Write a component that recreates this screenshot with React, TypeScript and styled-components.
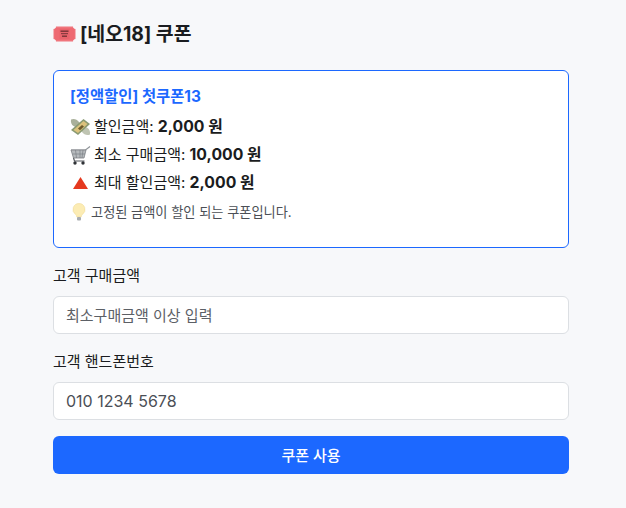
import React from 'react';
import styled, { createGlobalStyle } from 'styled-components';

const GlobalStyle = createGlobalStyle`
    html, body {
        margin: 0;
        padding: 0;
        background: #f7f8fa;
    }
    body {
        font-family: Inter, "Noto Sans CJK KR", sans-serif;
        color: #1a1c20;
    }
`;

const Root = styled.div`
    width: 516px;
    margin-left: 53px;
    padding: 21px 0 34px;
`;

const Title = styled.h1`
    display: flex;
    align-items: center;
    gap: 4px;
    height: 26px;
    margin: 0 0 23px;
    font-size: 19.4px;
    line-height: 26px;
    font-weight: 700;
`;

const Card = styled.div`
    box-sizing: border-box;
    height: 178px;
    padding: 15px 16px;
    background: #ffffff;
    border: 1px solid #1c68ff;
    border-radius: 6px;
`;

const CouponName = styled.div`
    height: 22px;
    margin-bottom: 5px;
    font-size: 15.4px;
    line-height: 22px;
    font-weight: 700;
    color: #1c68ff;
`;

const InfoRow = styled.div`
    display: flex;
    align-items: center;
    gap: 3px;
    height: 28px;
    font-size: 15px;
    line-height: 28px;
`;

const Amount = styled.strong`
    font-size: 15.8px;
    font-weight: 700;
`;

const Note = styled.div`
    display: flex;
    align-items: center;
    gap: 3px;
    height: 20px;
    margin-top: 5px;
    font-size: 13.2px;
    line-height: 20px;
    color: #4b4f56;
`;

const Field = styled.label`
    display: block;
    margin-top: 18px;
`;

const FieldLabel = styled.div`
    height: 20px;
    margin-bottom: 10px;
    font-size: 15px;
    line-height: 20px;
    color: #1a1c20;
`;

const TextInput = styled.input`
    display: block;
    box-sizing: border-box;
    width: 100%;
    height: 38px;
    padding: 0 12px;
    background: #ffffff;
    border: 1px solid #dcdfe3;
    border-radius: 6px;
    outline: none;
    font-family: inherit;
    font-size: 16px;
    color: #4b4f56;
    &::placeholder {
        color: #5c6066;
        opacity: 1;
        font-size: 15px;
    }
`;

const SubmitButton = styled.button`
    display: block;
    width: 100%;
    height: 38px;
    margin-top: 16px;
    padding-bottom: 2px;
    background: #1c68ff;
    border: none;
    border-radius: 6px;
    font-family: inherit;
    font-size: 15px;
    font-weight: 500;
    color: #ffffff;
    cursor: pointer;
`;

const Icon = styled.svg`
    flex: none;
    display: block;
`;

const TicketIcon = () => (
    <Icon width="23" height="16" viewBox="0 0 23 16">
        <path d="M3 .5h17A2.500 2.500 0 0 0 22.500 3v10a2.500 2.500 0 0 0-2.500 2.500H3A2.500 2.500 0 0 0 .5 13V3A2.500 2.500 0 0 0 3 .5z" fill="#f0757c" />
        <rect x="1.500" y="2" width="20" height="12" rx="2" fill="#ee6a72" />
        <rect x="6.500" y="3" width="10" height="10" fill="#e9636b" />
        <rect x="7.500" y="4.500" width="8" height="1.400" fill="#7a3236" />
        <rect x="8" y="7" width="7" height="1.200" fill="#8c3c41" />
        <rect x="9" y="9.500" width="5" height="1.400" fill="#7a3236" />
    </Icon>
);

const MoneyIcon = () => (
    <Icon width="21" height="18" viewBox="0 0 21 18">
        <path d="M1 1.500c3-1.500 6 0 8 2.500l2 2-4 4-3.500-2C1.500 7 .5 4 1 1.500z" fill="#a9b09a" />
        <path d="M20 16.500c-3 1.500-6 0-8-2.500l-2-2 4-4 3.500 2c2 1 3 4 2.500 6.500z" fill="#bfc4b2" />
        <path d="M1 12l12.500-11 6.500 5L8 17z" fill="#8a9a72" />
        <path d="M3.500 12L13.500 3l4 3L8 15z" fill="#dcc27c" />
        <path d="M8 10.500l4-3.500 2 1.500-4 3.700z" fill="#6e5a2c" />
    </Icon>
);

const CartIcon = () => (
    <Icon width="21" height="19" viewBox="0 0 21 19">
        <path d="M1 4h14.500L20 0.500" fill="none" stroke="#8f9499" strokeWidth="1.200" />
        <path d="M1 4l2.500 8h10.500L16 4z" fill="#b6babd" stroke="#7d8186" strokeWidth="0.800" />
        <path d="M2.500 8h12.500M5.500 4l1 8M10 4v8M13 4l-1 8" stroke="#7d8186" strokeWidth="0.700" />
        <path d="M3.500 12l1 3h10" fill="none" stroke="#55595e" strokeWidth="1.200" />
        <circle cx="5" cy="17" r="1.700" fill="#2f3236" />
        <circle cx="13" cy="17" r="1.700" fill="#2f3236" />
    </Icon>
);

const TriangleIcon = () => (
    <Icon width="21" height="14" viewBox="0 0 21 14">
        <path d="M10.500 1L18 13H3z" fill="#e5391f" />
    </Icon>
);

const BulbIcon = () => (
    <Icon width="18" height="18" viewBox="0 0 18 18">
        <path d="M9 0.500a6 6 0 0 0-3.600 10.800c.8.700 1.300 1.500 1.400 2.700h4.400c.1-1.200.6-2 1.400-2.700A6 6 0 0 0 9 0.500z" fill="#fcecb4" stroke="#f0dc98" strokeWidth="0.600" />
        <rect x="7" y="14" width="4" height="3.500" rx="1" fill="#a9adb1" />
    </Icon>
);

function App() {
    return (
        <Root>
            <GlobalStyle />
            <Title>
                <TicketIcon />
                [네오18] 쿠폰
            </Title>
            <Card>
                <CouponName>[정액할인] 첫쿠폰13</CouponName>
                <InfoRow>
                    <MoneyIcon />
                    <span>할인금액: <Amount>2,000 원</Amount></span>
                </InfoRow>
                <InfoRow>
                    <CartIcon />
                    <span>최소 구매금액: <Amount>10,000 원</Amount></span>
                </InfoRow>
                <InfoRow>
                    <TriangleIcon />
                    <span>최대 할인금액: <Amount>2,000 원</Amount></span>
                </InfoRow>
                <Note>
                    <BulbIcon />
                    고정된 금액이 할인 되는 쿠폰입니다.
                </Note>
            </Card>
            <Field>
                <FieldLabel>고객 구매금액</FieldLabel>
                <TextInput placeholder="최소구매금액 이상 입력" />
            </Field>
            <Field>
                <FieldLabel>고객 핸드폰번호</FieldLabel>
                <TextInput defaultValue="010 1234 5678" />
            </Field>
            <SubmitButton>쿠폰 사용</SubmitButton>
        </Root>
    );
}

export default App;
